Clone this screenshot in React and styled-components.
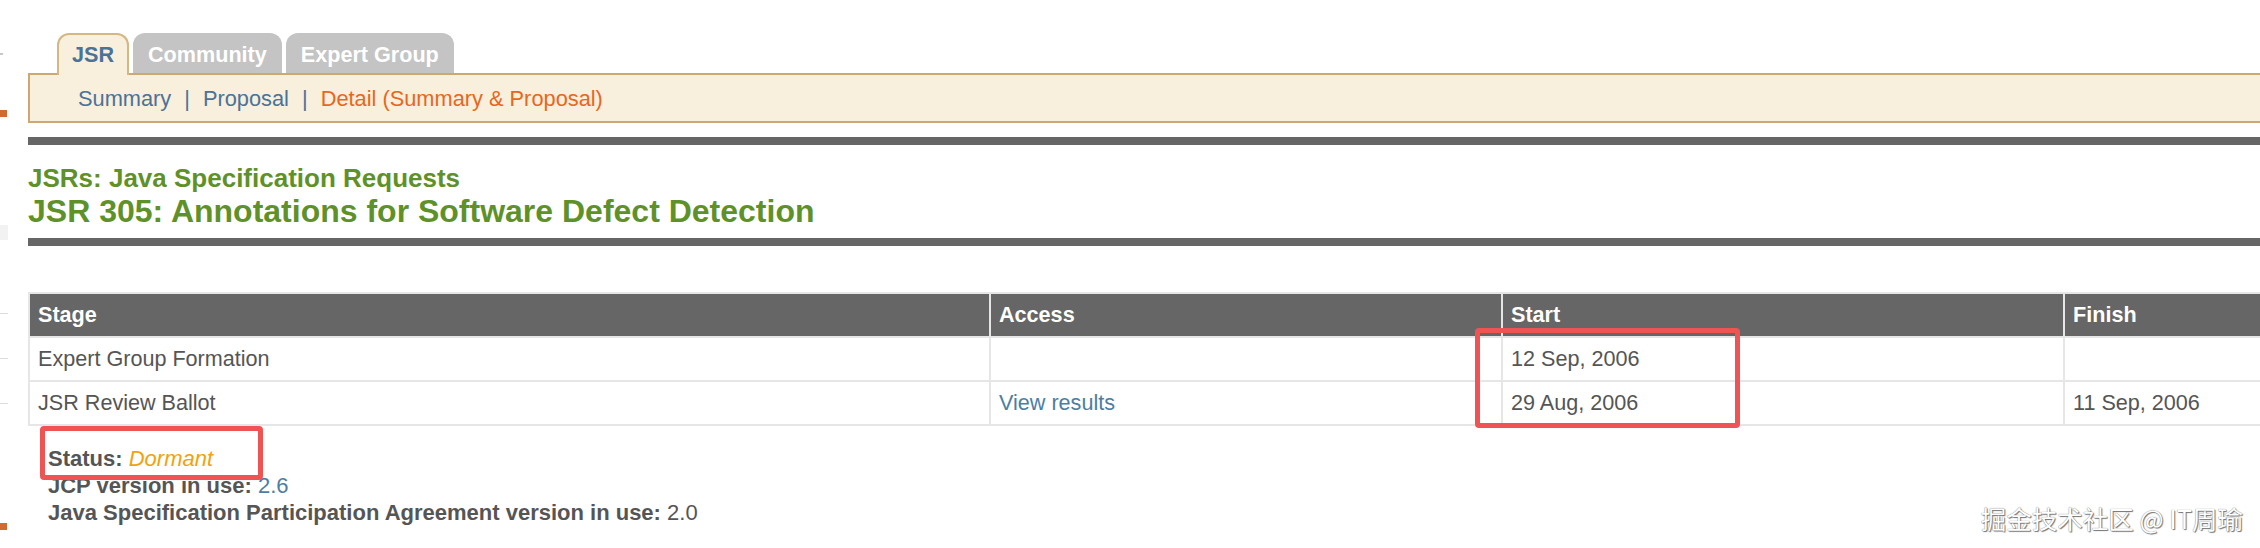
import styled, { createGlobalStyle } from "styled-components";

const GlobalStyle = createGlobalStyle`
  *, *::before, *::after {
    box-sizing: border-box;
  }
  html, body {
    margin: 0;
    padding: 0;
    background: #fff;
  }
  body {
    overflow: hidden;
    font-family: "Liberation Sans", Arial, Helvetica, sans-serif;
  }
`;

const marks = [
  { gap: 53, w: 3, h: 2, c: "#c8c8c8" },
  { gap: 55, w: 7, h: 7, c: "#d2692e" },
  { gap: 108, w: 8, h: 15, c: "#f2f2f2" },
  { gap: 73, w: 8, h: 1, c: "#dcdcdc" },
  { gap: 44, w: 8, h: 1, c: "#dcdcdc" },
  { gap: 44, w: 8, h: 1, c: "#dcdcdc" },
  { gap: 119, w: 7, h: 7, c: "#d2692e" },
];

const stages = [
  { stage: "Expert Group Formation", access: "", start: "12 Sep, 2006", finish: "" },
  { stage: "JSR Review Ballot", access: "View results", start: "29 Aug, 2006", finish: "11 Sep, 2006" },
];

const App = () => {
  return (
    <Page>
      <GlobalStyle />
      <Gutter>
        {marks.map((m, i) => (
          <Mark key={i} $gap={m.gap} $w={m.w} $h={m.h} $c={m.c} />
        ))}
      </Gutter>

      <Main>
        <TabRow>
          <Tab $active>JSR</Tab>
          <Tab>Community</Tab>
          <Tab>Expert Group</Tab>
        </TabRow>
        <SubNav>
          <NavLink>Summary</NavLink>
          <Sep>|</Sep>
          <NavLink>Proposal</NavLink>
          <Sep>|</Sep>
          <NavLink $current>Detail (Summary &amp; Proposal)</NavLink>
        </SubNav>

        <Rule $top={14} />
        <Kicker>JSRs: Java Specification Requests</Kicker>
        <Title>JSR 305: Annotations for Software Defect Detection</Title>
        <Rule $top={9} />

        <TableWrap>
          <Table>
            <colgroup>
              <col style={{ width: 961 }} />
              <col style={{ width: 512 }} />
              <col style={{ width: 562 }} />
              <col />
            </colgroup>
            <thead>
              <tr>
                <Th>Stage</Th>
                <Th>Access</Th>
                <Th>Start</Th>
                <Th>Finish</Th>
              </tr>
            </thead>
            <tbody>
              {stages.map((s) => (
                <tr key={s.stage}>
                  <Td>{s.stage}</Td>
                  <Td>{s.access && <Link>{s.access}</Link>}</Td>
                  <Td>{s.start}</Td>
                  <Td>{s.finish}</Td>
                </tr>
              ))}
            </tbody>
          </Table>
          <Callout $left={1447} $top={36} $width={265} $height={100} />
        </TableWrap>

        <Meta>
          <MetaLine>
            <Label>Status:</Label> <Dormant>Dormant</Dormant>
          </MetaLine>
          <MetaLine>
            <Label>JCP version in use:</Label> <Link>2.6</Link>
          </MetaLine>
          <MetaLine>
            <Label>Java Specification Participation Agreement version in use:</Label> 2.0
          </MetaLine>
          <Callout $left={12} $top={-19} $width={223} $height={54} />
        </Meta>
      </Main>

      <Watermark>掘金技术社区 @ IT周瑜</Watermark>
    </Page>
  );
};

// whole screenshot frame
const Page = styled.div`
  position: relative;
  display: flex;
  width: 2260px;
  height: 548px;
  overflow: hidden;
`;

// cut-off left sidebar remnants
const Gutter = styled.div`
  flex: 0 0 8px;
  display: flex;
  flex-direction: column;
`;

const Mark = styled.span`
  display: block;
  margin-top: ${({ $gap }) => $gap}px;
  width: ${({ $w }) => $w}px;
  height: ${({ $h }) => $h}px;
  background: ${({ $c }) => $c};
`;

const Main = styled.main`
  flex: 0 0 2360px;
  padding-left: 20px;
  color: #555;
  font-size: 21.6px;
`;

const TabRow = styled.div`
  position: relative;
  z-index: 1;
  display: flex;
  align-items: flex-start;
  gap: 4px;
  margin-top: 33px;
  padding-left: 29px;
  height: 40px;
`;

const Tab = styled.a`
  height: ${({ $active }) => ($active ? "42px" : "40px")};
  padding: 8px 13px 0;
  line-height: 24px;
  font-weight: bold;
  border-radius: 12px 12px 0 0;
  border: 2px solid ${({ $active }) => ($active ? "#d6b782" : "#c4c4c4")};
  border-bottom: none;
  background: ${({ $active }) => ($active ? "#f8efdd" : "#c4c4c4")};
  color: ${({ $active }) => ($active ? "#4b7398" : "#fff")};
  cursor: pointer;
`;

const SubNav = styled.nav`
  display: flex;
  align-items: center;
  height: 50px;
  padding: 2px 0 0 48px;
  border: 2px solid #cda871;
  border-right: none;
  background: #f8efdd;
  font-size: 21.8px;
`;

const NavLink = styled.a`
  color: ${({ $current }) => ($current ? "#e8671c" : "#4b7398")};
  text-decoration: none;
  cursor: pointer;
`;

const Sep = styled.span`
  margin: 0 13px;
  color: #4b7398;
`;

const Rule = styled.hr`
  margin: ${({ $top }) => $top}px 0 0;
  height: 8px;
  border: none;
  background: #666;
`;

const Kicker = styled.h2`
  margin: 18px 0 0;
  font-size: 26px;
  line-height: 30px;
  color: #5f9129;
`;

const Title = styled.h1`
  margin: 0;
  font-size: 32px;
  line-height: 36px;
  color: #5f9129;
`;

const TableWrap = styled.div`
  position: relative;
  margin-top: 46px;
`;

const Table = styled.table`
  width: 100%;
  table-layout: fixed;
  border-collapse: collapse;
  border: 2px solid #e6e6e6;
`;

const Th = styled.th`
  height: 44px;
  padding: 0 8px;
  border: 2px solid #e6e6e6;
  background: #666;
  color: #fff;
  text-align: left;
  font-weight: bold;
`;

const Td = styled.td`
  height: 44px;
  padding: 0 8px;
  border: 2px solid #e6e6e6;
  color: #555;
`;

const Link = styled.a`
  color: #4b7ea2;
  text-decoration: none;
  cursor: pointer;
`;

const Meta = styled.div`
  position: relative;
  margin-top: 19px;
  padding-left: 20px;
  font-size: 22px;
  line-height: 27px;
`;

const MetaLine = styled.div``;

const Label = styled.b`
  color: #555;
`;

const Dormant = styled.i`
  color: #f2a20c;
`;

// red annotation frames drawn over the screenshot
const Callout = styled.div`
  position: absolute;
  left: ${({ $left }) => $left}px;
  top: ${({ $top }) => $top}px;
  width: ${({ $width }) => $width}px;
  height: ${({ $height }) => $height}px;
  border: 5px solid #f05354;
  border-radius: 4px;
  pointer-events: none;
`;

const Watermark = styled.div`
  position: absolute;
  right: 17px;
  bottom: 15px;
  font-family: "Noto Sans CJK SC", "Liberation Sans", sans-serif;
  font-size: 25.5px;
  line-height: 30px;
  color: #fff;
  text-shadow: 0 0 1px #555, 1px 1px 1px #777;
`;

export default App;
